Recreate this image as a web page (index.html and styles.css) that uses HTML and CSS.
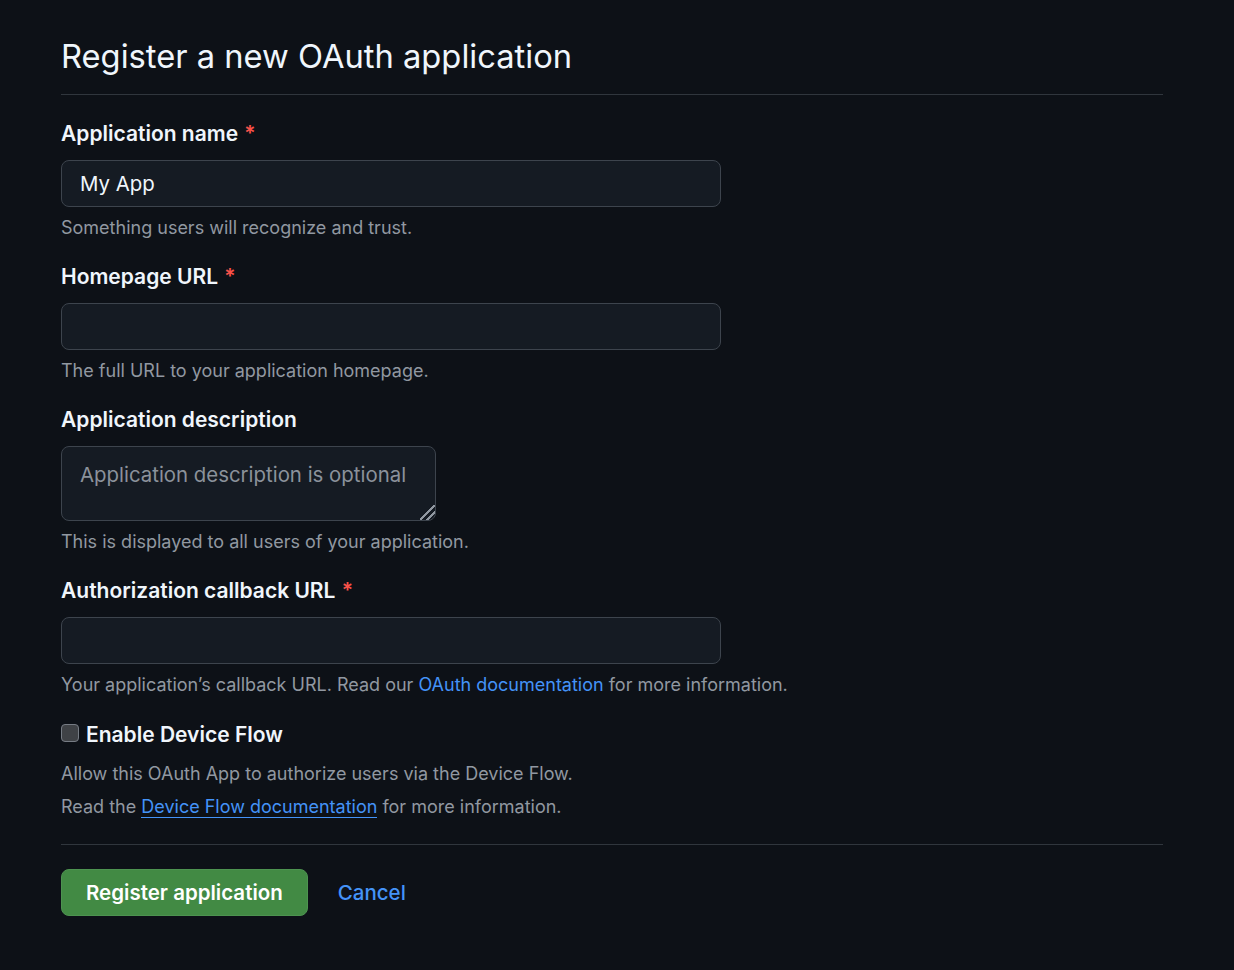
FILE: index.html
```html
<!DOCTYPE html>
<html lang="en">
<head>
<meta charset="utf-8">
<title>Register a new OAuth application</title>
<link rel="stylesheet" href="styles.css">
</head>
<body>
<main class="page">
  <h1 class="title">Register a new OAuth application</h1>
  <form class="form">
    <div class="field">
      <label class="label">Application name <span class="req">*</span></label>
      <input class="input" type="text" value="My App">
      <p class="note">Something users will recognize and trust.</p>
    </div>
    <div class="field">
      <label class="label">Homepage URL <span class="req">*</span></label>
      <input class="input" type="text">
      <p class="note">The full URL to your application homepage.</p>
    </div>
    <div class="field">
      <label class="label">Application description</label>
      <textarea class="textarea" placeholder="Application description is optional"></textarea>
      <p class="note">This is displayed to all users of your application.</p>
    </div>
    <div class="field">
      <label class="label">Authorization callback URL <span class="req">*</span></label>
      <input class="input" type="text">
      <p class="note">Your application’s callback URL. Read our <a class="link" href="#">OAuth documentation</a> for more information.</p>
    </div>
    <div class="check-field">
      <label class="check-label"><span class="checkbox"></span>Enable Device Flow</label>
      <p class="note">Allow this OAuth App to authorize users via the Device Flow.</p>
      <p class="note">Read the <a class="link underline" href="#">Device Flow documentation</a> for more information.</p>
    </div>
    <div class="actions">
      <button class="btn" type="button">Register application</button>
      <a class="cancel" href="#">Cancel</a>
    </div>
  </form>
</main>
</body>
</html>
```
FILE: styles.css
```css
* { box-sizing: border-box; }
html, body { margin: 0; padding: 0; }
body {
  background: #0d1117;
  color: #f0f6fc;
  font-family: Inter, "Noto Sans", "Liberation Sans", sans-serif;
  width: 1234px;
  height: 970px;
  overflow: hidden;
}
.page {
  margin-left: 61px;
  width: 1102px;
  padding-top: 34px;
}
.title {
  margin: 0;
  font-size: 32.7px;
  font-weight: 400;
  line-height: 44px;
  padding-bottom: 16px;
  border-bottom: 1px solid #30363d;
}
.form { padding-top: 25px; }
.field { margin-bottom: 22px; }
.label {
  display: block;
  font-size: 21px;
  font-weight: 600;
  line-height: 28px;
  margin-bottom: 12px;
}
.req { color: #f85149; margin-left: 1px; }
.input, .textarea {
  display: block;
  width: 660px;
  height: 47px;
  background: #151b23;
  border: 1px solid #3d444d;
  border-radius: 8px;
  color: #f0f6fc;
  font-family: inherit;
  font-size: 20.4px;
  padding: 0 18px;
  outline: none;
}
.textarea {
  width: 375px;
  height: 75px;
  padding: 14px 18px;
  resize: both;
  line-height: 28px;
}
.textarea::-webkit-resizer {
  background: linear-gradient(135deg, transparent 44%, #9198a1 44%, #9198a1 54%, transparent 54%, transparent 68%, #9198a1 68%, #9198a1 78%, transparent 78%);
}
.textarea::placeholder { color: #8b929b; }
.note {
  margin: 8px 0 0;
  font-size: 18px;
  line-height: 26px;
  color: #9198a1;
}
.link { color: #4493f8; text-decoration: none; }
.underline { border-bottom: 1px solid #4493f8; }
.check-field {
  margin-top: 23px;
  padding-bottom: 24px;
  border-bottom: 1px solid #30363d;
}
.check-label {
  display: flex;
  align-items: center;
  font-size: 21px;
  font-weight: 600;
  line-height: 28px;
  margin-bottom: 12px;
}
.check-label + .note { margin-top: 0; }
.check-field .note + .note { margin-top: 7px; }
.checkbox {
  width: 18px;
  height: 18px;
  border: 1px solid #767c84;
  background: #3f4246;
  border-radius: 4px;
  margin-right: 7px;
  margin-top: -4px;
}
.actions {
  display: flex;
  align-items: center;
  gap: 30px;
  margin-top: 24px;
}
.btn {
  height: 47px;
  padding: 0 24px;
  background: #428a44;
  border: 1px solid #4d9350;
  border-radius: 8px;
  color: #ffffff;
  font-family: inherit;
  font-size: 20.5px;
  font-weight: 600;
}
.cancel {
  color: #4493f8;
  font-size: 20.5px;
  font-weight: 500;
  text-decoration: none;
}
```
